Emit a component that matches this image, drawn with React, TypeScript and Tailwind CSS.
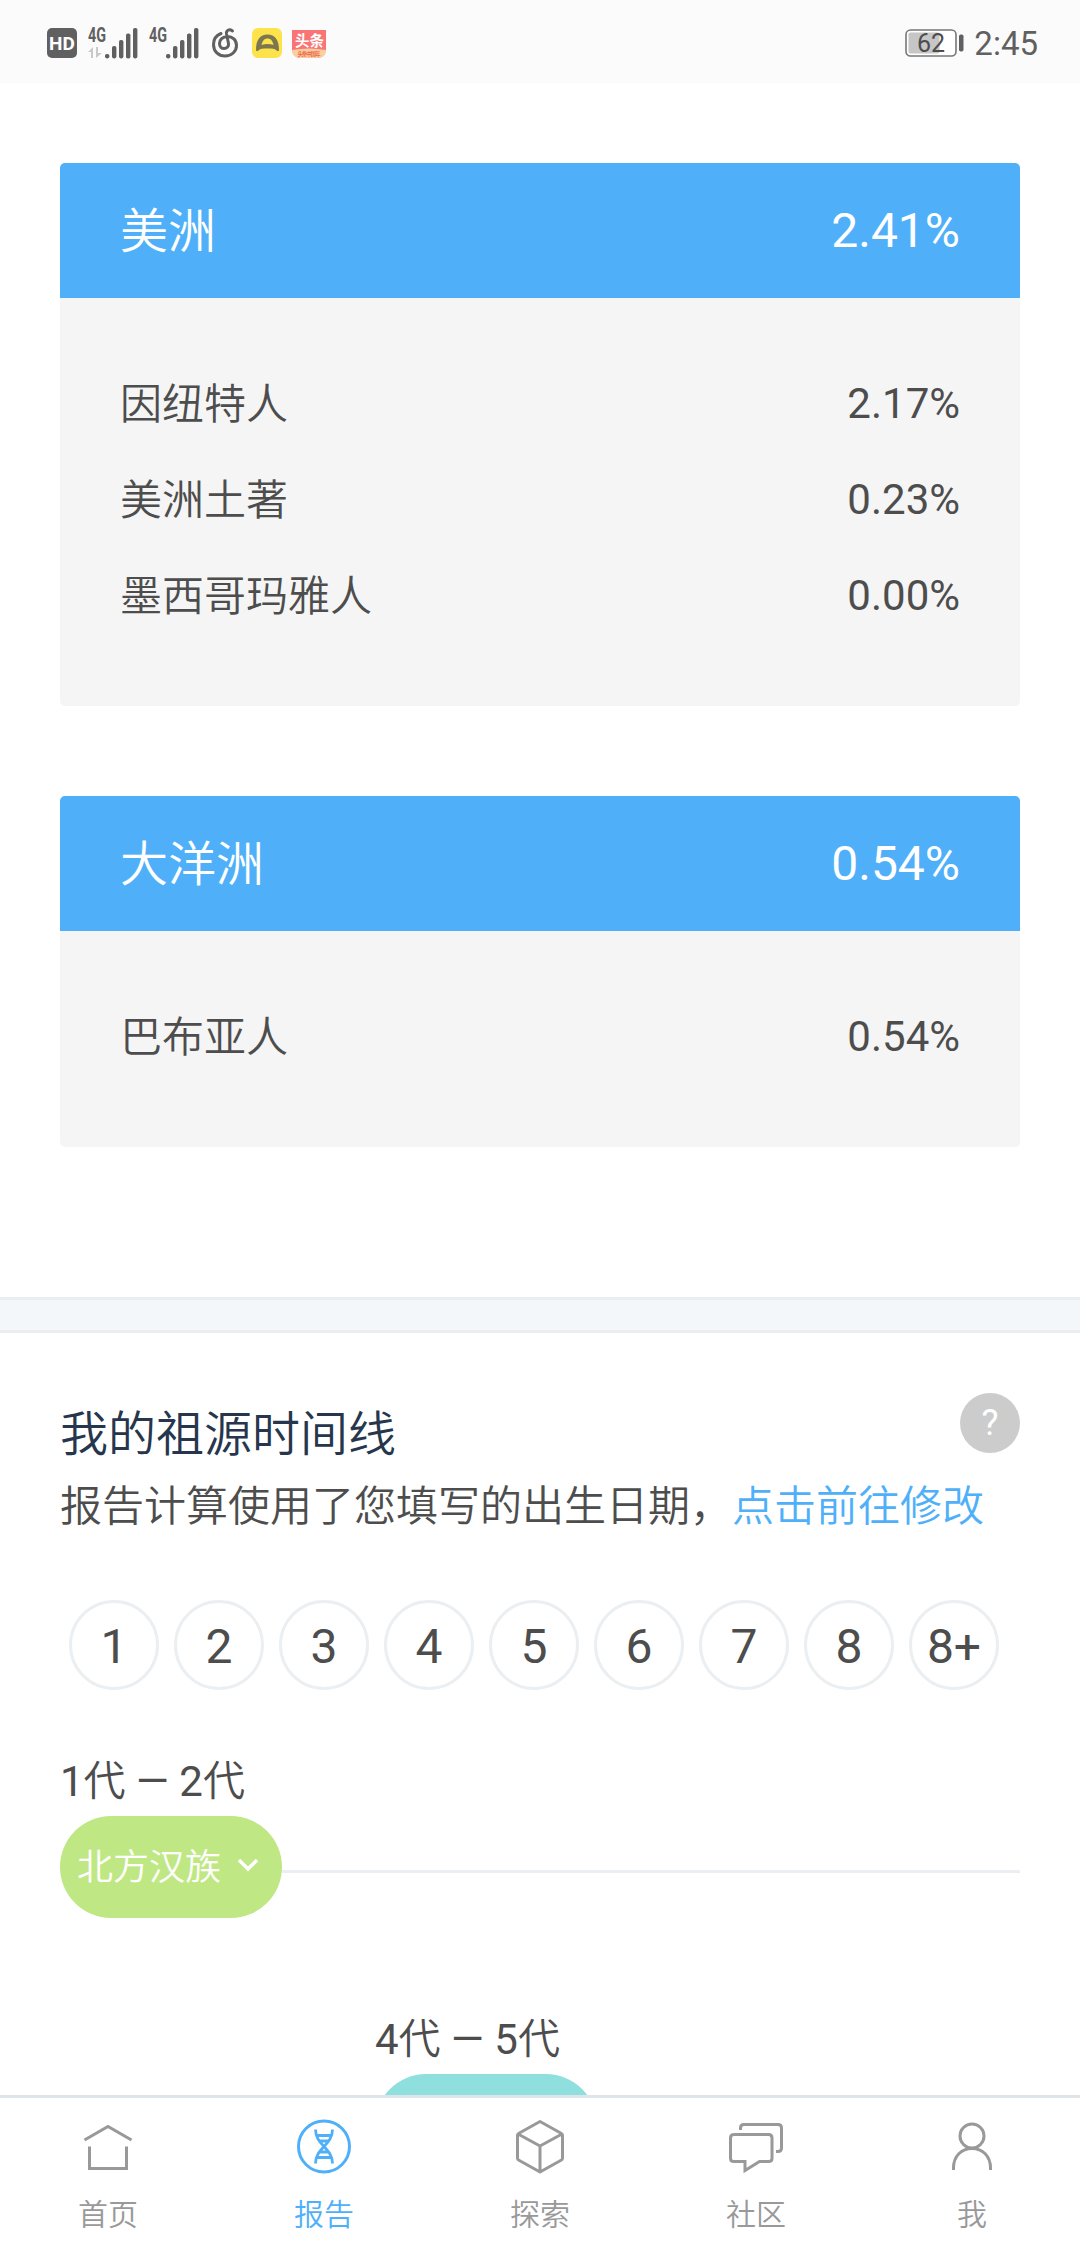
import type { ReactNode } from 'react';

type Region = {
  name: string;
  percent: string;
  items: { name: string; percent: string }[];
};

const regions: Region[] = [
  {
    name: '美洲',
    percent: '2.41%',
    items: [
      { name: '因纽特人', percent: '2.17%' },
      { name: '美洲土著', percent: '0.23%' },
      { name: '墨西哥玛雅人', percent: '0.00%' },
    ],
  },
  {
    name: '大洋洲',
    percent: '0.54%',
    items: [{ name: '巴布亚人', percent: '0.54%' }],
  },
];

const generations = ['1', '2', '3', '4', '5', '6', '7', '8', '8+'];

function Signal({ data = false }: { data?: boolean }) {
  return (
    <svg width="52" height="48" viewBox="0 -7 52 48" fill="#606060">
      <text x="1" y="15.5" fontSize="20" fontWeight="700" textLength="18" lengthAdjust="spacingAndGlyphs">4G</text>
      {data && (
        <g fill="#c9c9c9">
          <path d="M1 26l5-5v11H4v-6z" />
          <path d="M9 21h2v6h4l-6 5z" />
        </g>
      )}
      <rect x="18" y="28" width="4.4" height="4.4" rx="1.8" />
      <rect x="25" y="20" width="4.4" height="12.4" rx="1.8" />
      <rect x="32" y="14" width="4.4" height="18.4" rx="1.8" />
      <rect x="39" y="7.5" width="4.4" height="25" rx="1.8" />
      <rect x="46" y="2" width="4.4" height="30.4" rx="1.8" />
    </svg>
  );
}

function StatusBar() {
  return (
    <header className="flex h-[83px] shrink-0 items-center bg-[#fbfbfb] pt-[3px] pr-[42px] pl-[47px] text-[#606060]">
      <div className="flex h-[30px] w-[30px] items-center justify-center rounded-[5px] bg-[#606060] text-[19px] leading-none font-bold text-white">
        HD
      </div>
      <div className="ml-[10px]"><Signal data /></div>
      <div className="ml-[9px]"><Signal /></div>

      {/* music */}
      <svg className="ml-[11px]" width="28" height="32" viewBox="0 0 28 32" fill="none" stroke="#606060" strokeWidth="3" strokeLinecap="round">
        <path d="M10 6.500C5 8.500 2.500 12.500 2.500 17.500C2.500 24.500 7.500 29 14 29C20.500 29 25.500 24.500 25.500 18.500C25.500 13 21.500 9.500 16.500 9.500C11.500 9.500 8.500 13 8.500 16.500C8.500 19.500 10.500 21.500 13 21.500C16 21.500 18 19.300 17.500 16.500L15.500 7C15 3.500 18 1.500 21.500 4" />
      </svg>

      {/* taxi */}
      <svg className="ml-[13px]" width="30" height="30" viewBox="0 0 30 30">
        <rect width="30" height="30" rx="6" fill="#fde34b" />
        <path fillRule="evenodd" fill="#7d774f" d="M4 22C4 12 8 6.500 15.500 6.500S27 12 27 22C27 23.500 25 23.500 24 22C23 20.700 20 20.500 15.500 20.500S8 20.700 7 22C6 23.500 4 23.500 4 22ZM9.500 17C13 15.800 18 15.800 21.500 17C20.500 12.500 18.500 10.500 15.500 10.500S10.500 12.500 9.500 17Z" />
      </svg>

      {/* news */}
      <svg className="ml-[10px]" width="34" height="31" viewBox="0 0 34 31">
        <path d="M0 2h34v19c0 6-4 9-9 9H9c-5 0-9-3-9-9z" fill="#f97575" />
        <path d="M0 22q17-3 34 0c0 5-4 8-9 8H9c-5 0-9-3-9-8z" fill="#fbcf9f" />
        <text x="3" y="17.500" fontSize="14.500" fontWeight="700" fill="#fff">头条</text>
        <text x="5.500" y="28" fontSize="5.500" fontWeight="700" fill="#ee6a50" textLength="23">头条中国年</text>
      </svg>

      <svg className="ml-auto" width="59" height="28" viewBox="0 0 59 28">
        <rect x="1" y="1" width="50" height="26" rx="4.500" fill="#fff" stroke="#777" strokeWidth="1.600" />
        <rect x="3.500" y="3.500" width="31" height="21" rx="2" fill="#c6c6c6" />
        <rect x="54" y="5.500" width="4.500" height="17" rx="1.800" fill="#606060" />
        <text x="26" y="22.500" textAnchor="middle" fontSize="25" fill="#4d4d4d">62</text>
      </svg>
      <span className="ml-[10px] text-[33px] leading-none">2:45</span>
    </header>
  );
}

function RegionCard({ region }: { region: Region }) {
  return (
    <section className="overflow-hidden rounded-[5px] bg-[#f5f5f5]">
      <div className="flex h-[135px] items-center justify-between bg-[#4fb0f9] px-[60px] text-[48px] text-white">
        <h2 className="pt-[3px] font-[350]">{region.name}</h2>
        <span>{region.percent}</span>
      </div>
      <ul className="pt-[58px] pb-[62px] text-[42px] text-[#4d4d4d]">
        {region.items.map((item) => (
          <li key={item.name} className="flex h-[96px] items-center justify-between px-[60px]">
            <span className="pt-[1px] font-[350]">{item.name}</span>
            <span className="pb-[2px]">{item.percent}</span>
          </li>
        ))}
      </ul>
    </section>
  );
}

function GenerationLabel({ from, to }: { from: number; to: number }) {
  return (
    <p className="text-[42px] leading-[60px] text-[#4d4d4d]">
      {from}<span className="font-[350]">代</span> — {to}<span className="font-[350]">代</span>
    </p>
  );
}

function Timeline() {
  return (
    <section className="px-[60px] pt-[60px]">
      <div className="flex justify-between">
        <h2 className="pt-[12px] text-[48px] leading-[60px] font-[350] text-[#26364d]">我的祖源时间线</h2>
        <button className="flex h-[60px] w-[60px] items-center justify-center rounded-full bg-[#ccc] text-[36px] leading-none text-white">?</button>
      </div>
      <p className="mt-[12px] text-[42px] leading-[60px] font-[350] whitespace-nowrap text-[#4d4d4d]">
        报告计算使用了您填写的出生日期，<a className="text-[#4fb0f9]">点击前往修改</a>
      </p>

      <div className="mt-[63px] ml-[9px] flex gap-[15px]">
        {generations.map((g) => (
          <div key={g} className="flex h-[90px] w-[90px] items-center justify-center rounded-full border-[3px] border-[#ebeff2] pt-[3px] text-[48px] text-[#4d4d4d]">
            {g}
          </div>
        ))}
      </div>

      <div className="mt-[62px]">
        <GenerationLabel from={1} to={2} />
        <div className="mt-[4px] flex items-center">
          <div className="flex h-[102px] w-[222px] items-center rounded-full bg-[#bfe884] pt-[2px] pl-[17px] text-[36px] font-[350] text-white">
            北方汉族
            <svg className="-mt-[6px] ml-[16px]" width="22" height="16" viewBox="0 0 22 16" fill="none" stroke="#fff" strokeWidth="3.500">
              <path d="M2 3l9 9 9-9" />
            </svg>
          </div>
          <div className="mt-[9px] h-[3px] flex-1 bg-[#ebeef2]" />
        </div>
      </div>

      <div className="mt-[92px] ml-[315px]">
        <GenerationLabel from={4} to={5} />
        <div className="mt-[4px] h-[102px] w-[222px] rounded-full bg-[#8fdfdf]" />
      </div>
    </section>
  );
}

function NavItem({ label, active = false, children }: { label: string; active?: boolean; children: ReactNode }) {
  return (
    <a className={`flex flex-1 flex-col items-center pt-[19px] ${active ? 'text-[#4fb0f9]' : 'text-[#999]'}`}>
      <svg width="60" height="60" viewBox="0 0 60 60" fill="none" stroke="currentColor" strokeWidth="3">
        {children}
      </svg>
      <span className="mt-[18px] text-[30px] leading-[40px] font-[350]">{label}</span>
    </a>
  );
}

function BottomNav() {
  return (
    <nav className="flex h-[149px] shrink-0 border-t-[3px] border-[#dfe4e8] bg-white">
      <NavItem label="首页">
        <path d="M6.500 23L30 9.500L53.500 23M11.500 29.500V51.500H48.500V29.500" />
      </NavItem>
      <NavItem label="报告" active>
        <circle cx="30" cy="29.500" r="25.500" />
        <path d="M21.500 12.500C21.500 28 38.500 31 38.500 46.500M38.500 12.500C38.500 28 21.500 31 21.500 46.500M23 18.500H37M26 24H34M26 35H34M23 40.500H37" strokeWidth="2.800" />
      </NavItem>
      <NavItem label="探索">
        <path d="M30 4.500L51.500 16.500Q52.500 17 52.500 18.500V41Q52.500 42.500 51.500 43L30 55L8.500 43Q7.500 42.500 7.500 41V18.500Q7.500 17 8.500 16.500ZM8 17L30 29L52 17M30 29V55" strokeLinejoin="round" />
      </NavItem>
      <NavItem label="社区">
        <path d="M7.500 17.500H42.500Q46 17.500 46 21V41.500Q46 44.500 42.500 44.500H33.500L19 53.500V44.500H8Q4.500 44.500 4.500 41.500V21Q4.500 17.500 8 17.500" />
        <path d="M14.500 13V11Q14.500 7.500 18 7.500H52Q55.500 7.500 55.500 11V31Q55.500 34.500 52 34.500H50" />
      </NavItem>
      <NavItem label="我">
        <circle cx="30" cy="19" r="12" />
        <path d="M11.500 53V51C11.500 39 19.500 31.500 30 31.500S48.500 39 48.500 51V53" />
      </NavItem>
    </nav>
  );
}

export default function App() {
  return (
    <div className="flex h-[2244px] w-[1080px] flex-col overflow-hidden bg-white font-[Roboto,'Noto_Sans_CJK_SC',sans-serif]">
      <StatusBar />
      <main className="min-h-0 flex-1 overflow-hidden">
        <div className="flex flex-col gap-[90px] px-[60px] pt-[80px]">
          {regions.map((region) => (
            <RegionCard key={region.name} region={region} />
          ))}
        </div>
        <div className="mt-[150px] h-[36px] border-y-[3px] border-[#ebeef0] bg-[#f3f7fa]" />
        <Timeline />
      </main>
      <BottomNav />
    </div>
  );
}
